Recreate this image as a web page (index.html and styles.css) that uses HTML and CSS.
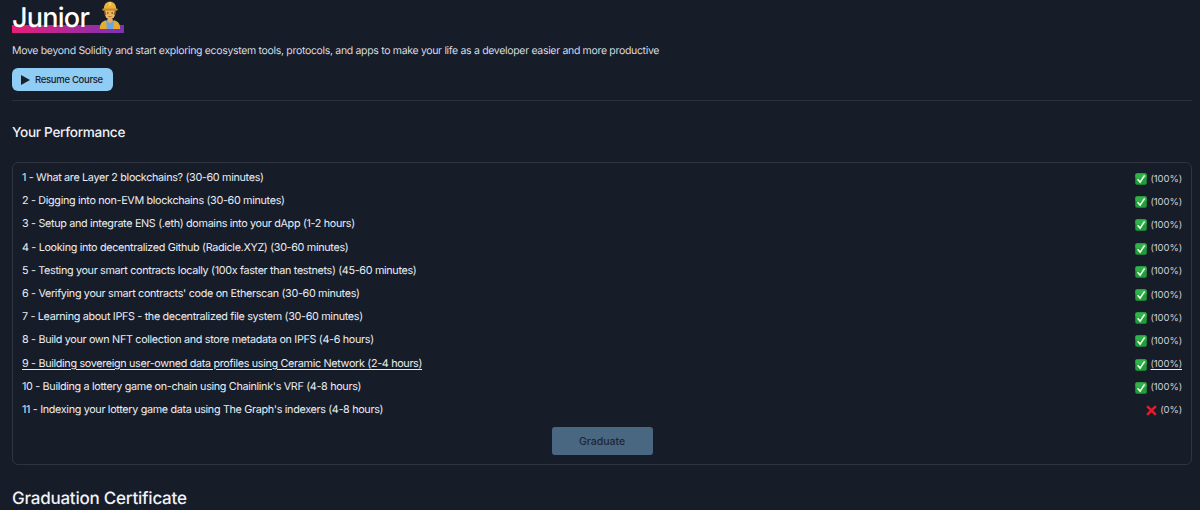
FILE: index.html
```html
<!DOCTYPE html>
<html lang="en">
<head>
<meta charset="utf-8">
<title>Junior</title>
<link rel="stylesheet" href="styles.css">
</head>
<body>
<svg class="defs" width="0" height="0" aria-hidden="true">
  <defs>
    <symbol id="check" viewBox="0 0 14 14">
      <rect x="0.3" y="0.3" width="13.4" height="13.4" rx="2" fill="#1f9e3a"/>
      <rect x="0.3" y="0.3" width="13.4" height="6" rx="2" fill="#3cc454" opacity=".55"/>
      <path d="M3 7.2 6 10.6 11.2 2.8" fill="none" stroke="#eef8ee" stroke-width="1.9"/>
    </symbol>
    <symbol id="cross" viewBox="0 0 12 12">
      <path d="M1.2 1.2 10.8 10.8M10.8 1.2 1.2 10.8" stroke="#dd1f2d" stroke-width="2.7" fill="none"/>
    </symbol>
  </defs>
</svg>
<main class="page">
  <header class="head">
    <h1 class="title"><span class="title-mark">Junior <svg class="worker" viewBox="0 0 28 36" aria-label="construction worker">
      <path d="M1 36c0-7 3-10 8-11h10c5 1 8 4 8 11z" fill="#6aa5dc"/>
      <path d="M1 36c0-7 3-10 8-11l1 11zM27 36c0-7-3-10-8-11l-1 11z" fill="#e7ab2e"/>
      <path d="M10.500 26l3.500 2.500 3.500-2.500v-3h-7z" fill="#e8a95e"/>
      <ellipse cx="14" cy="15.500" rx="7" ry="8" fill="#f0b45c"/>
      <path d="M7 13c1 2 1 3 1.500 5M21 13c-1 2-1 3-1.500 5" stroke="#8a5a2a" stroke-width="1.400" fill="none"/>
      <circle cx="11.200" cy="15.500" r="1" fill="#4a3020"/><circle cx="16.800" cy="15.500" r="1" fill="#4a3020"/>
      <path d="M12 20h4" stroke="#9a5f30" stroke-width="1"/>
      <path d="M6 11C6 4 9.500 1 14 1s8 3 8 10z" fill="#e8b33c"/>
      <path d="M12.500 1.200h3v5h-3z" fill="#f4cf62"/>
      <rect x="4" y="9.500" width="20" height="3" rx="1.500" fill="#c98f28"/>
    </svg></span></h1>
    <p class="lead">Move beyond Solidity and start exploring ecosystem tools, protocols, and apps to make your life as a developer easier and more productive</p>
    <button class="resume" type="button"><span class="play"></span>Resume Course</button>
  </header>
  <h2 class="section">Your Performance</h2>
  <section class="panel">
    <ul class="list">
      <li class="row"><span>1 - What are Layer 2 blockchains? (30-60 minutes)</span><span class="score"><svg class="ok"><use href="#check"/></svg>(100%)</span></li>
      <li class="row"><span>2 - Digging into non-EVM blockchains (30-60 minutes)</span><span class="score"><svg class="ok"><use href="#check"/></svg>(100%)</span></li>
      <li class="row"><span>3 - Setup and integrate ENS (.eth) domains into your dApp (1-2 hours)</span><span class="score"><svg class="ok"><use href="#check"/></svg>(100%)</span></li>
      <li class="row"><span>4 - Looking into decentralized Github (Radicle.XYZ) (30-60 minutes)</span><span class="score"><svg class="ok"><use href="#check"/></svg>(100%)</span></li>
      <li class="row"><span>5 - Testing your smart contracts locally (100x faster than testnets) (45-60 minutes)</span><span class="score"><svg class="ok"><use href="#check"/></svg>(100%)</span></li>
      <li class="row"><span>6 - Verifying your smart contracts' code on Etherscan (30-60 minutes)</span><span class="score"><svg class="ok"><use href="#check"/></svg>(100%)</span></li>
      <li class="row"><span>7 - Learning about IPFS - the decentralized file system (30-60 minutes)</span><span class="score"><svg class="ok"><use href="#check"/></svg>(100%)</span></li>
      <li class="row"><span>8 - Build your own NFT collection and store metadata on IPFS (4-6 hours)</span><span class="score"><svg class="ok"><use href="#check"/></svg>(100%)</span></li>
      <li class="row row-hover"><span>9 - Building sovereign user-owned data profiles using Ceramic Network (2-4 hours)</span><span class="score"><svg class="ok"><use href="#check"/></svg>(100%)</span></li>
      <li class="row"><span>10 - Building a lottery game on-chain using Chainlink's VRF (4-8 hours)</span><span class="score"><svg class="ok"><use href="#check"/></svg>(100%)</span></li>
      <li class="row"><span>11 - Indexing your lottery game data using The Graph's indexers (4-8 hours)</span><span class="score"><svg class="no"><use href="#cross"/></svg>(0%)</span></li>
    </ul>
    <div class="actions"><button class="graduate" type="button" disabled>Graduate</button></div>
  </section>
  <h2 class="section cert">Graduation Certificate</h2>
</main>
</body>
</html>
```

FILE: styles.css
```css
* { box-sizing: border-box; }
html, body { margin: 0; height: 510px; overflow: hidden; }
body {
  background: #171c29;
  color: #e9edf2;
  font-family: Inter, "Liberation Sans", sans-serif;
  text-rendering: geometricPrecision;
}
.defs { display: block; height: 0; }
.page { padding: 0 8px 0 12px; }
.head { padding-bottom: 9px; border-bottom: 1px solid #2b303c; }
.title { margin: 0; height: 33px; font-size: 27px; font-weight: 500; line-height: 36px; letter-spacing: -0.75px; color: #fff; }
.title-mark {
  display: inline-block;
  height: 33px;
  padding-right: 3px;
  background: linear-gradient(90deg, #e61e78, #7b32b4) left bottom / 100% 8px no-repeat;
  white-space: nowrap;
}
.worker { display: inline-block; width: 22px; height: 28px; vertical-align: -2px; margin-left: 3px; }
.lead { margin: 9px 0 0; font-size: 10.5px; line-height: 17px; letter-spacing: -0.32px; color: #d6dbe2; }
.resume {
  display: flex;
  align-items: center;
  gap: 5px;
  height: 23px;
  margin-top: 9px;
  padding: 0 10px 0 9px;
  border: 0;
  border-radius: 6px;
  background: #90cdf4;
  color: #1a202c;
  font: 500 9.5px Inter, "Liberation Sans", sans-serif;
  letter-spacing: -0.3px;
}
.play { width: 0; height: 0; border-left: 9px solid #1a202c; border-top: 5px solid transparent; border-bottom: 5px solid transparent; }
.section { margin: 0; font-weight: 500; color: #f0f2f5; }
.section:not(.cert) { margin-top: 23px; font-size: 13.6px; line-height: 18px; letter-spacing: -0.3px; }
.cert { margin-top: 23px; font-size: 17px; line-height: 22px; letter-spacing: -0.23px; }
.panel {
  margin-top: 20px;
  height: 303px;
  padding: 3px 9px 0;
  border: 1px solid #2f3440;
  border-radius: 6px;
}
.list { margin: 0; padding: 0; list-style: none; }
.row {
  display: flex;
  justify-content: space-between;
  align-items: center;
  height: 23.2px;
  font-size: 10.8px;
  letter-spacing: -0.33px;
  color: #e9edf2;
}
.row-hover { text-decoration: underline; text-underline-offset: 2px; }
.score { display: flex; align-items: center; gap: 3px; font-size: 9.5px; letter-spacing: -0.1px; color: #ccd1d9; padding-top: 3px; }
.ok { width: 12px; height: 12px; }
.no { width: 11px; height: 11px; }
.actions { display: flex; justify-content: center; margin-top: 6px; }
.graduate {
  width: 101px;
  height: 28px;
  border: 0;
  border-radius: 3px;
  background: #4a6782;
  color: #1c2536;
  font: 500 10.5px Inter, "Liberation Sans", sans-serif;
}
```
